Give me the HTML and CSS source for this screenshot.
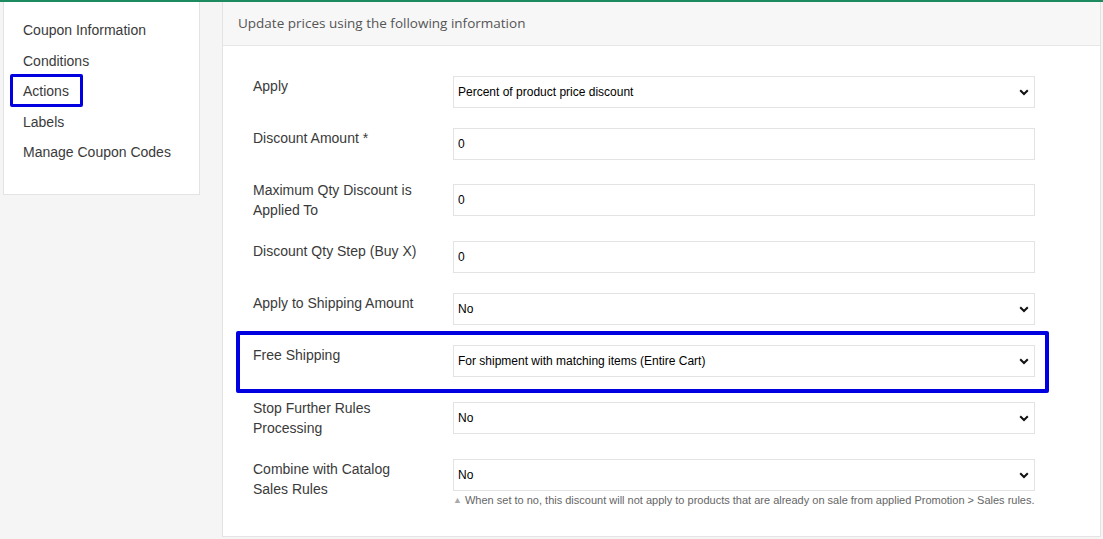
FILE: index.html
```html
<!DOCTYPE html>
<html lang="en">
<head>
    <meta charset="UTF-8">
    <meta name="viewport" content="width=device-width, initial-scale=1.0">
    <title>Cart Price Rule | Actions</title>
    <link rel="stylesheet" href="styles.css">
</head>
<body>
    <div class="page">
        <!-- Side menu -->
        <aside class="side-menu">
            <a href="#info">Coupon Information</a>
            <a href="#conditions">Conditions</a>
            <a href="#actions" class="active">Actions</a>
            <a href="#labels">Labels</a>
            <a href="#codes">Manage Coupon Codes</a>
        </aside>

        <!-- Actions panel -->
        <section class="panel" id="actions">
            <div class="panel-head">Update prices using the following information</div>
            <form class="rule-form">
                <div class="field-row">
                    <label for="apply">Apply</label>
                    <div class="control">
                        <select id="apply">
                            <option>Percent of product price discount</option>
                        </select>
                        <svg class="chevron" width="10" height="7" viewBox="0 0 10 7"><path d="M1.2 1.2L5 5l3.8-3.8" fill="none" stroke="#111" stroke-width="2"/></svg>
                    </div>
                </div>

                <div class="field-row gap-24">
                    <label for="amount">Discount Amount *</label>
                    <div class="control">
                        <input type="text" id="amount" value="0">
                    </div>
                </div>

                <div class="field-row multi">
                    <label for="max-qty">Maximum Qty Discount is Applied To</label>
                    <div class="control">
                        <input type="text" id="max-qty" value="0">
                    </div>
                </div>

                <div class="field-row">
                    <label for="step">Discount Qty Step (Buy X)</label>
                    <div class="control">
                        <input type="text" id="step" value="0">
                    </div>
                </div>

                <div class="field-row">
                    <label for="ship-amount">Apply to Shipping Amount</label>
                    <div class="control">
                        <select id="ship-amount">
                            <option>No</option>
                        </select>
                        <svg class="chevron" width="10" height="7" viewBox="0 0 10 7"><path d="M1.2 1.2L5 5l3.8-3.8" fill="none" stroke="#111" stroke-width="2"/></svg>
                    </div>
                </div>

                <div class="field-row gap-25 highlight">
                    <label for="free-ship">Free Shipping</label>
                    <div class="control">
                        <select id="free-ship">
                            <option>For shipment with matching items (Entire Cart)</option>
                        </select>
                        <svg class="chevron" width="10" height="7" viewBox="0 0 10 7"><path d="M1.2 1.2L5 5l3.8-3.8" fill="none" stroke="#111" stroke-width="2"/></svg>
                    </div>
                </div>

                <div class="field-row multi">
                    <label for="stop">Stop Further Rules Processing</label>
                    <div class="control">
                        <select id="stop">
                            <option>No</option>
                        </select>
                        <svg class="chevron" width="10" height="7" viewBox="0 0 10 7"><path d="M1.2 1.2L5 5l3.8-3.8" fill="none" stroke="#111" stroke-width="2"/></svg>
                    </div>
                </div>

                <div class="field-row last">
                    <label for="combine">Combine with Catalog Sales Rules</label>
                    <div class="control">
                        <select id="combine">
                            <option>No</option>
                        </select>
                        <svg class="chevron" width="10" height="7" viewBox="0 0 10 7"><path d="M1.2 1.2L5 5l3.8-3.8" fill="none" stroke="#111" stroke-width="2"/></svg>
                        <p class="note"><span class="tri">&#9650;</span> When set to no, this discount will not apply to products that are already on sale from applied Promotion &gt; Sales rules.</p>
                    </div>
                </div>
            </form>
        </section>
    </div>
</body>
</html>
```

FILE: styles.css
```css
/* Base */
body {
    margin: 0;
    font-family: 'Liberation Sans', Arial, sans-serif;
    color: #3a3a3a;
    background: #f5f5f5;
    border-top: 2px solid #1d8a5f;
}

.page {
    display: flex;
    align-items: flex-start;
    padding: 0 2px 0 3px;
    gap: 22px;
}

/* Side menu */
.side-menu {
    width: 176px;
    flex: none;
    display: flex;
    flex-direction: column;
    align-items: flex-start;
    padding: 13px 0 26px 19px;
    background: #fff;
    border: 1px solid #e3e3e3;
    border-top: none;
}

.side-menu a {
    position: relative;
    display: inline-block;
    padding: 5px 0;
    line-height: 20.5px;
    font-size: 14px;
    color: #3a3a3a;
    text-decoration: none;
}

.side-menu a.active::after {
    content: "";
    position: absolute;
    top: -2px;
    bottom: 0;
    left: -13px;
    right: -14px;
    border: 3px solid #0000e0;
    border-radius: 2px;
}

/* Panel */
.panel {
    flex: 1;
    background: #fff;
    border: 1px solid #e3e3e3;
    border-top: none;
    height: 535px;
    box-sizing: border-box;
}

.panel-head {
    height: 43px;
    line-height: 42px;
    padding: 0 15px;
    background: #f7f7f7;
    border-bottom: 1px solid #e6e6e6;
    font-family: 'Open Sans', sans-serif;
    font-size: 13.5px;
    color: #555;
}

.rule-form {
    padding: 30px 65px 0 30px;
}

.field-row {
    position: relative;
    display: flex;
    align-items: flex-start;
    margin-bottom: 20px;
}

.field-row.gap-24 { margin-bottom: 24px; }
.field-row.gap-25 { margin-bottom: 25px; }

.field-row label {
    width: 168px;
    flex: none;
    padding-right: 32px;
    font-size: 14px;
    line-height: 20px;
    color: #3a3a3a;
}

.field-row.multi { margin-bottom: 21px; }
.field-row.multi label { margin-top: -4px; }

.control {
    position: relative;
    flex: 1;
}

.control input,
.control select {
    display: block;
    width: 100%;
    height: 32px;
    box-sizing: border-box;
    margin: 0;
    padding: 0 4px;
    border: 1px solid #e3e3e3;
    border-radius: 0;
    background: #fff;
    font-family: 'Liberation Sans', Arial, sans-serif;
    font-size: 12px;
    color: #000;
    outline: none;
}

.control select {
    -webkit-appearance: none;
    appearance: none;
    padding-right: 30px;
}

.chevron {
    position: absolute;
    top: 13px;
    right: 6px;
    pointer-events: none;
}

.note {
    margin: 2px 0 0;
    font-size: 11px;
    line-height: 14px;
    color: #666;
    white-space: nowrap;
}

.note .tri {
    font-size: 9px;
    color: #aaa;
    vertical-align: 1px;
}

/* Highlighted row */
.field-row.highlight::after {
    content: "";
    position: absolute;
    top: -14px;
    bottom: -16px;
    left: -17px;
    right: -14px;
    border: 4px solid #0000e0;
    border-radius: 2px;
    pointer-events: none;
}
```
